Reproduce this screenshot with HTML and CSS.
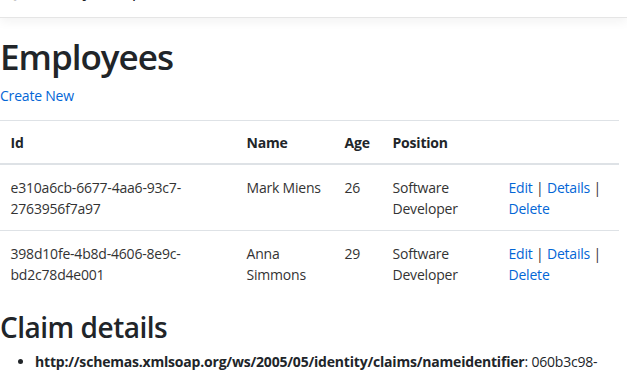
FILE: index.html
```html
<!DOCTYPE html>
<html lang="en">
<head>
<meta charset="utf-8">
<title>Employees</title>
<link rel="stylesheet" href="styles.css">
</head>
<body>
<header class="navbar">
  <div class="nav-left">
    <span class="brand">Jwt Policy Sample</span>
    <span class="nav-link">Employees</span>
    <span class="nav-link">Privacy</span>
  </div>
  <div class="nav-right">
    <span class="nav-link">Register</span>
    <span class="nav-link">Login</span>
  </div>
</header>
<main class="container">
  <h1 class="title">Employees</h1>
  <p class="actions"><a href="#">Create New</a></p>
  <table class="table">
    <colgroup>
      <col class="c-id"><col class="c-name"><col class="c-age"><col class="c-pos"><col class="c-act">
    </colgroup>
    <thead>
      <tr><th>Id</th><th>Name</th><th>Age</th><th>Position</th><th></th></tr>
    </thead>
    <tbody>
      <tr>
        <td>e310a6cb-6677-4aa6-93c7-2763956f7a97</td>
        <td>Mark Miens</td>
        <td>26</td>
        <td>Software Developer</td>
        <td><a href="#">Edit</a> | <a href="#">Details</a> | <a href="#">Delete</a></td>
      </tr>
      <tr>
        <td>398d10fe-4b8d-4606-8e9c-bd2c78d4e001</td>
        <td>Anna Simmons</td>
        <td>29</td>
        <td>Software Developer</td>
        <td><a href="#">Edit</a> | <a href="#">Details</a> | <a href="#">Delete</a></td>
      </tr>
    </tbody>
  </table>
  <h2 class="subtitle">Claim details</h2>
  <ul class="claims">
    <li><strong>http://schemas.xmlsoap.org/ws/2005/05/identity/claims/nameidentifier</strong>: 060b3c98-7d1e-4c2a-9f3b-5a6e8d0c1b24</li>
    <li><strong>http://schemas.xmlsoap.org/ws/2005/05/identity/claims/name</strong>: mark.miens</li>
  </ul>
</main>
</body>
</html>
```
FILE: styles.css
```css
html {
  overflow: hidden;
  font-size: 14px;
}
body {
  margin: 0;
  font-family: "Open Sans", "Noto Sans", sans-serif;
  font-size: 14px;
  line-height: 21px;
  letter-spacing: -0.2px;
  color: #212529;
  background: #fff;
}
a {
  color: #0366d6;
  text-decoration: none;
}
.navbar {
  box-sizing: border-box;
  display: flex;
  justify-content: space-between;
  align-items: flex-end;
  height: 40px;
  margin-top: -22px;
  padding: 0 15px 16px;
  border-bottom: 1px solid #e5e5e5;
  box-shadow: 0 4px 10px rgba(0, 0, 0, 0.05);
  margin-bottom: 18px;
  color: #212529;
}
.nav-left, .nav-right {
  display: flex;
  gap: 16px;
}
.brand {
  font-size: 18px;
}
.nav-link {
  color: #212529;
}
.container {
  padding: 0;
  width: 619px;
}
.title {
  font-size: 35px;
  font-weight: 600;
  line-height: 42px;
  margin: 0 0 7px;
  letter-spacing: -1px;
}
.actions {
  margin: 0 0 14px;
}
.table {
  width: 619px;
  table-layout: fixed;
  border-collapse: collapse;
  margin-bottom: 14px;
}
.c-id { width: 236px; }
.c-name { width: 98px; }
.c-age { width: 48px; }
.c-pos { width: 116px; }
.c-act { width: 121px; }
.table th, .table td {
  padding: 10.5px;
  vertical-align: top;
  text-align: left;
  border-top: 1px solid #dee2e6;
}
.table td {
  padding-top: 11.5px;
  padding-bottom: 11.5px;
  color: #333;
}
.table th {
  font-weight: 700;
  vertical-align: bottom;
  border-bottom: 2px solid #dee2e6;
}
.subtitle {
  font-size: 28px;
  font-weight: 600;
  line-height: 34px;
  margin: 0 0 7px;
  letter-spacing: -0.5px;
}
.claims {
  margin: 0;
  padding-left: 35px;
}
.claims strong {
  font-weight: 700;
}
```
